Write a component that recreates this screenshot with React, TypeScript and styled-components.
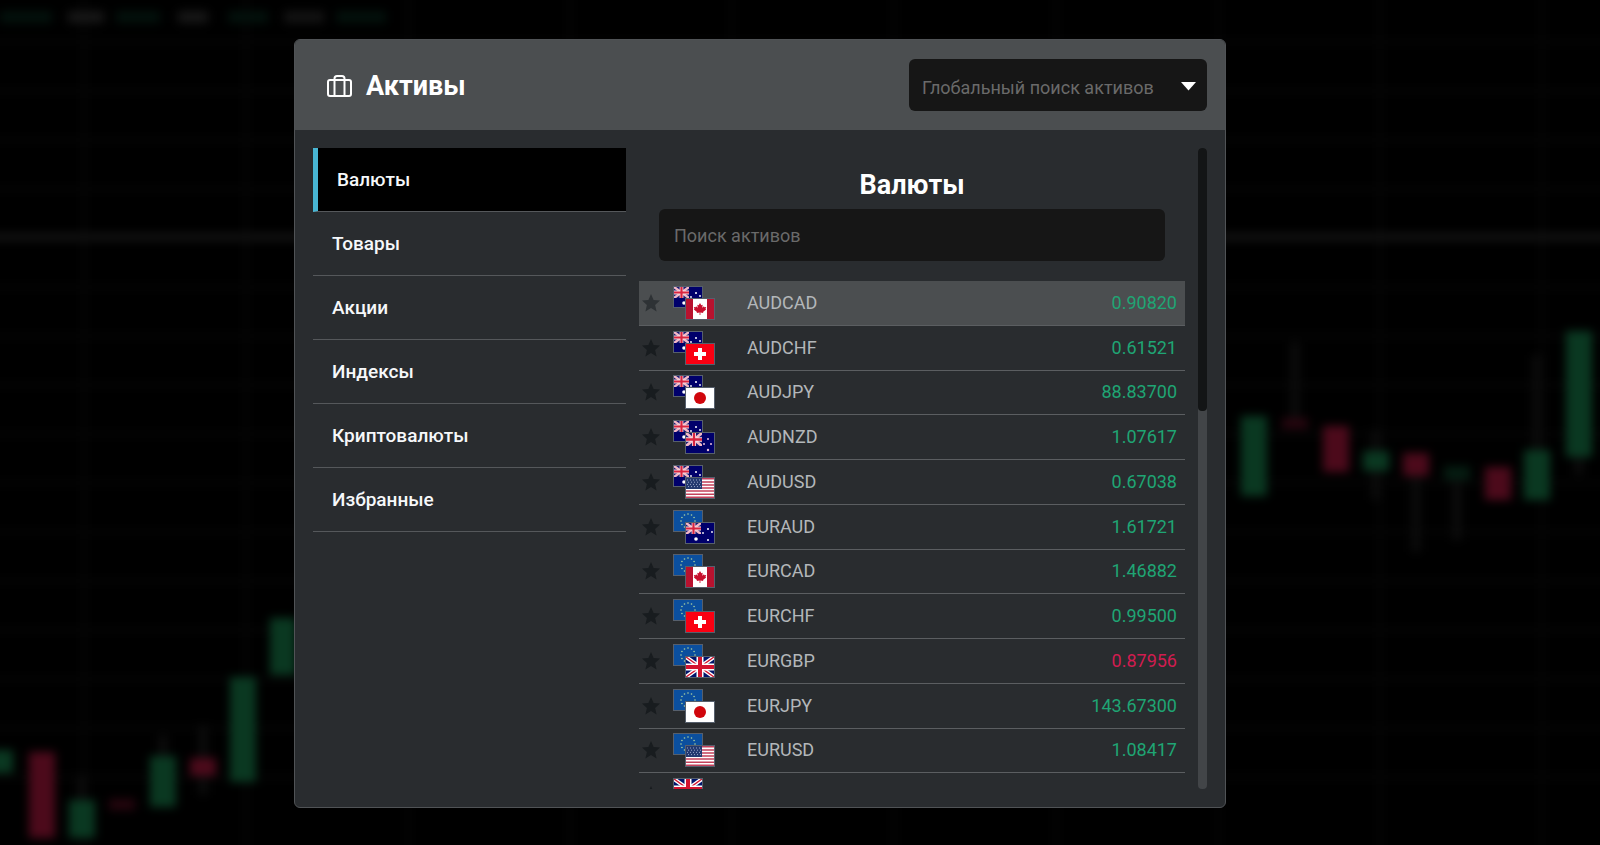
import React, { useState } from "react";
import styled, { createGlobalStyle } from "styled-components";

const GlobalStyle = createGlobalStyle`
  *, *::before, *::after { box-sizing: border-box; }
  body {
    margin: 0;
    background: #000;
    color: #fff;
    font-family: Roboto, "Noto Sans", sans-serif;
  }
  button, input, select { font: inherit; color: inherit; }
`;

const GREEN = "#1fa574";
const RED = "#d11c50";

/* ---------- Background chart ---------- */

const Backdrop = styled.svg`
  position: fixed;
  inset: 0;
  width: 100%;
  height: 100%;
  z-index: -1;
`;

type Candle = { x: number; top: number; bottom: number; up?: boolean; dim?: boolean };

const candles: Candle[] = [
  { x: 0, top: 750, bottom: 773, up: true },
  { x: 42, top: 752, bottom: 838 },
  { x: 82, top: 800, bottom: 838, up: true },
  { x: 122, top: 799, bottom: 810, dim: true },
  { x: 163, top: 756, bottom: 807, up: true },
  { x: 203, top: 758, bottom: 776 },
  { x: 243, top: 677, bottom: 782, up: true },
  { x: 283, top: 618, bottom: 675, up: true },
  { x: 1254, top: 416, bottom: 496, up: true },
  { x: 1295, top: 418, bottom: 429, dim: true },
  { x: 1336, top: 426, bottom: 472 },
  { x: 1376, top: 451, bottom: 471, up: true },
  { x: 1416, top: 453, bottom: 476 },
  { x: 1457, top: 466, bottom: 480, up: true, dim: true },
  { x: 1498, top: 467, bottom: 500 },
  { x: 1537, top: 450, bottom: 500, up: true },
  { x: 1579, top: 331, bottom: 457, up: true },
];

const wicks = [
  [203, 725, 795], [163, 735, 757], [82, 775, 800], [1295, 342, 420], [1376, 430, 500],
  [1416, 476, 552], [1457, 480, 540], [1537, 355, 450], [1579, 457, 475],
];

const legend: [number, number, string][] = [
  [0, 52, "#03110c"], [68, 36, "#171717"], [116, 44, "#03110c"], [178, 30, "#171717"],
  [228, 40, "#03110c"], [284, 40, "#131313"], [336, 50, "#03110c"],
];

const Chart = () => (
  <Backdrop viewBox="0 0 1600 845" preserveAspectRatio="xMidYMid slice" aria-hidden="true">
    <defs>
      <filter
        id="soft"
        filterUnits="userSpaceOnUse"
        x="-40"
        y="-40"
        width="1680"
        height="925"
        colorInterpolationFilters="sRGB"
      >
        <feGaussianBlur stdDeviation="5" />
      </filter>
    </defs>
    <g filter="url(#soft)">
      <rect x="-40" y="-40" width="1680" height="925" fill="#000" />
      {Array.from({ length: 16 }, (_, i) => (
        <rect key={i} x="-40" y={40 + i * 49} width="1680" height="4" fill="#060606" />
      ))}
      {Array.from({ length: 10 }, (_, i) => (
        <rect key={i} x={82 + i * 162} y="-40" width="4" height="925" fill="#060606" />
      ))}
      <rect x="-40" y="233" width="1680" height="8" fill="#121212" />
      {legend.map(([x, w, fill]) => (
        <rect key={x} x={x} y="11" width={w} height="12" fill={fill} />
      ))}
      {wicks.map(([x, a, b]) => (
        <rect key={x} x={x - 5} y={a} width="10" height={b - a} fill="#0b0b0b" />
      ))}
      {candles.map((c) => (
        <rect
          key={c.x}
          x={c.x - 13}
          y={c.top}
          width="26"
          height={c.bottom - c.top}
          fill={c.up ? "#0a3821" : "#4c0a1b"}
          opacity={c.dim ? 0.5 : 1}
        />
      ))}
    </g>
  </Backdrop>
);

/* ---------- Flags ---------- */

const UnionJack = () => (
  <>
    <path fill="#00156b" d="M0 0h28v20H0z" />
    <path stroke="#fff" strokeWidth="4" d="M0 0l28 20M28 0L0 20" />
    <path stroke="#d3142f" strokeWidth="1.4" d="M0 0l28 20M28 0L0 20" />
    <path stroke="#fff" strokeWidth="7" d="M14 0v20M0 10h28" />
    <path stroke="#d3142f" strokeWidth="4" d="M14 0v20M0 10h28" />
  </>
);

const Canton = () => (
  <>
    <path fill="#1a1a72" d="M0 0h28v20H0z" />
    <path stroke="#f3b8c6" strokeWidth="4.500" d="M0 0l28 20M28 0L0 20" />
    <path stroke="#f6dbe2" strokeWidth="7" d="M14 0v20M0 10h28" />
    <path stroke="#d8243f" strokeWidth="4" d="M14 0v20M0 10h28" />
  </>
);

const ring = Array.from({ length: 12 }, (_, i) => {
  const a = (i * Math.PI) / 6;
  return [14 + 7 * Math.sin(a), 10 - 7 * Math.cos(a)];
});

const flagArt: Record<string, React.ReactNode> = {
  au: (
    <>
      <path fill="#00006b" d="M0 0h28v20H0z" />
      <svg width="15" height="11" viewBox="0 0 28 20" preserveAspectRatio="none"><Canton /></svg>
      <g fill="#fff">
        <circle cx="10" cy="16" r="1.800" /><circle cx="22" cy="17" r="1" /><circle cx="22" cy="6" r="1" />
        <circle cx="17" cy="10" r=".9" /><circle cx="26" cy="9" r=".9" />
      </g>
    </>
  ),
  nz: (
    <>
      <path fill="#00006b" d="M0 0h28v20H0z" />
      <svg width="16" height="13" viewBox="0 0 28 20" preserveAspectRatio="none"><Canton /></svg>
      <g fill="#e8c0d8">
        <circle cx="22" cy="6" r="1" /><circle cx="18" cy="11" r="1" />
        <circle cx="25" cy="11" r="1" /><circle cx="22" cy="17" r="1.200" />
      </g>
    </>
  ),
  ca: (
    <>
      <path fill="#fff" d="M0 0h28v20H0z" />
      <path fill="#b8122f" d="M0 0h7v20H0zM21 0h7v20h-7z" />
      <path fill="#c8102e" d="M14 4l1.300 2.300 1.400-.6-.5 3 1.800-1.400.3 1 1.900-.2-.7 1.800.7.5-3.200 2.500.3 1.100-2.900-.4V16h-.8v-2.400l-2.900.4.3-1.100-3.200-2.500.7-.5-.7-1.800 1.900.2.300-1 1.800 1.400-.5-3 1.400.6z" />
    </>
  ),
  ch: (
    <>
      <path fill="#fa0012" d="M0 0h28v20H0z" />
      <path fill="#fff" d="M12 4h4v4h4v4h-4v4h-4v-4H8V8h4z" />
    </>
  ),
  jp: (
    <>
      <path fill="#fff" d="M0 0h28v20H0z" />
      <circle cx="14" cy="10" r="6" fill="#d0060c" />
    </>
  ),
  us: (
    <>
      <path fill="#fff" d="M0 0h28v20H0z" />
      <path stroke="#c4405a" strokeWidth="1.540" d="M0 .8h28M0 3.900h28M0 7h28M0 10h28M0 13.100h28M0 16.200h28M0 19.200h28" />
      <path fill="#243a70" d="M0 0h16v11H0z" />
      <path stroke="#9aa6c8" strokeWidth="1" strokeDasharray="1 2" d="M1 2h14M2 4.200h13M1 6.400h14M2 8.600h13" />
    </>
  ),
  eu: (
    <>
      <path fill="#0b4f9e" d="M0 0h28v20H0z" />
      {ring.map(([x, y], i) => <circle key={i} cx={x} cy={y} r=".8" fill="#a9cfa0" />)}
    </>
  ),
  gb: <UnionJack />,
};

const FlagPair = styled.span`
  display: grid;
  width: 42px;
  height: 34px;
`;

const FlagBox = styled.svg<{ $front?: boolean }>`
  grid-area: 1 / 1;
  place-self: ${(p) => (p.$front ? "end" : "start")};
  width: 30px;
  height: 22px;
  border: 1px solid #565f6c;
`;

const Flag = ({ code, front }: { code: string; front?: boolean }) => (
  <FlagBox $front={front} viewBox="0 0 28 20" fill="none" aria-hidden="true">
    {flagArt[code]}
  </FlagBox>
);

/* ---------- Dialog ---------- */

const Overlay = styled.main`
  display: flex;
  justify-content: center;
  align-items: flex-start;
  min-height: 100vh;
  padding: 39px 80px 36px 0;
`;

const Dialog = styled.section`
  width: 100%;
  max-width: 932px;
  border: 1px solid #505356;
  border-radius: 6px;
  background: #292c2f;
  overflow: hidden;
`;

const Header = styled.header`
  display: flex;
  align-items: center;
  justify-content: space-between;
  padding: 19px 18px 19px 31px;
  background: #4b4e50;
`;

const Title = styled.h1`
  display: flex;
  align-items: center;
  gap: 13px;
  margin: 0;
  padding-top: 2px;
  font-size: 27px;
  line-height: 32px;
  font-weight: 700;
`;

const SearchSelect = styled.label`
  display: grid;
  align-items: center;
  width: 298px;
`;

const Select = styled.select`
  grid-area: 1 / 1;
  appearance: none;
  width: 100%;
  height: 52px;
  padding: 4px 40px 0 13px;
  border: 0;
  border-radius: 6px;
  background: #161616;
  color: #6a6a6a;
  font-size: 18px;
`;

const Caret = styled.svg`
  grid-area: 1 / 1;
  justify-self: end;
  margin: 2px 10px 0 0;
  pointer-events: none;
`;

const Body = styled.div`
  display: flex;
  gap: 13px;
  height: calc(100vh - 168px);
  padding: 18px;
`;

const Categories = styled.nav`
  flex: 0 0 313px;
`;

const Category = styled.button<{ $active: boolean }>`
  display: block;
  width: 100%;
  height: 64px;
  padding: 0 19px;
  border: 0;
  border-bottom: 1px solid #55585b;
  border-left: ${(p) => (p.$active ? "5px solid #48b5d3" : "0")};
  background: ${(p) => (p.$active ? "#000" : "transparent")};
  color: #f6f8fa;
  font-size: 19px;
  font-weight: 500;
  text-align: left;
  cursor: pointer;
`;

const Assets = styled.section`
  flex: 1;
  min-width: 0;
  overflow: hidden;
`;

const AssetsTitle = styled.h2`
  margin: 0;
  padding: 21px 0 8px;
  font-size: 27px;
  line-height: 32px;
  font-weight: 700;
  text-align: center;
`;

const SearchField = styled.div`
  padding: 0 20px 20px;
`;

const SearchInput = styled.input`
  display: block;
  width: 100%;
  height: 52px;
  padding: 0 15px;
  border: 0;
  border-radius: 6px;
  background: #161616;
  font-size: 18px;
  &::placeholder { color: #6a6a6a; opacity: 1; }
`;

const Table = styled.table`
  width: 100%;
  height: 537px;
  border-collapse: separate;
  border-spacing: 0;
  font-size: 18px;
  line-height: 22px;
`;

const Row = styled.tr<{ $selected: boolean }>`
  background: ${(p) => (p.$selected ? "#4b4e50" : "transparent")};
  --star: ${(p) => (p.$selected ? "#2e3235" : "#181c1f")};
`;

const Cell = styled.td`
  padding: 0;
  border-bottom: 1px solid #5b5e61;
  vertical-align: middle;
`;

const StarCell = styled(Cell)`
  width: 34px;
`;

const FlagCell = styled(Cell)`
  width: 74px;
`;

const SymbolCell = styled(Cell)`
  color: #b3b7ba;
`;

const PriceCell = styled(Cell)<{ $down?: boolean }>`
  padding-right: 8px;
  color: ${(p) => (p.$down ? RED : GREEN)};
  text-align: right;
`;

const StarButton = styled.button`
  display: block;
  padding: 0 3px;
  border: 0;
  background: none;
  color: var(--star);
  cursor: pointer;
  svg { display: block; }
`;

const Track = styled.div`
  flex: 0 0 9px;
  border-radius: 4px;
  background: #424548;
`;

const Thumb = styled.div`
  height: 41%;
  border-radius: 4px;
  background: #131516;
`;

const categories = ["Валюты", "Товары", "Акции", "Индексы", "Криптовалюты", "Избранные"];

type Asset = { base: string; quote: string; symbol?: string; price?: string; down?: boolean };

const assets: Asset[] = [
  { base: "au", quote: "ca", symbol: "AUDCAD", price: "0.90820" },
  { base: "au", quote: "ch", symbol: "AUDCHF", price: "0.61521" },
  { base: "au", quote: "jp", symbol: "AUDJPY", price: "88.83700" },
  { base: "au", quote: "nz", symbol: "AUDNZD", price: "1.07617" },
  { base: "au", quote: "us", symbol: "AUDUSD", price: "0.67038" },
  { base: "eu", quote: "au", symbol: "EURAUD", price: "1.61721" },
  { base: "eu", quote: "ca", symbol: "EURCAD", price: "1.46882" },
  { base: "eu", quote: "ch", symbol: "EURCHF", price: "0.99500" },
  { base: "eu", quote: "gb", symbol: "EURGBP", price: "0.87956", down: true },
  { base: "eu", quote: "jp", symbol: "EURJPY", price: "143.67300" },
  { base: "eu", quote: "us", symbol: "EURUSD", price: "1.08417" },
  { base: "gb", quote: "au" },
];

const Suitcase = () => (
  <svg width="27" height="24" viewBox="0 0 27 24" fill="none" stroke="#fff" strokeWidth="2" strokeLinejoin="round" aria-hidden="true">
    <rect x="2" y="6" width="23" height="16" rx="2" />
    <path d="M8.500 22V4.500Q8.500 2 11 2h5q2.500 0 2.500 2.500V22" />
  </svg>
);

export default function App() {
  const [active, setActive] = useState(0);
  return (
    <>
      <GlobalStyle />
      <Chart />
      <Overlay>
        <Dialog aria-labelledby="title">
          <Header>
            <Title id="title"><Suitcase />Активы</Title>
            <SearchSelect>
              <Select aria-label="Глобальный поиск активов" defaultValue="">
                <option value="">Глобальный поиск активов</option>
              </Select>
              <Caret width="17" height="10" viewBox="0 0 17 10" aria-hidden="true">
                <path fill="#fff" d="M1 1h15L8.500 9.500z" />
              </Caret>
            </SearchSelect>
          </Header>
          <Body>
            <Categories>
              {categories.map((name, i) => (
                <Category key={name} type="button" $active={i === active} onClick={() => setActive(i)}>
                  {name}
                </Category>
              ))}
            </Categories>
            <Assets>
              <AssetsTitle>Валюты</AssetsTitle>
              <SearchField>
                <SearchInput type="text" aria-label="Поиск активов" placeholder="Поиск активов" />
              </SearchField>
              <Table>
                <tbody>
                  {assets.map((a, i) => (
                    <Row key={a.base + a.quote} $selected={i === 0}>
                      <StarCell>
                        <StarButton type="button" aria-label="Избранные">
                          <svg width="18" height="18" viewBox="0 0 18 18" fill="currentColor" aria-hidden="true">
                            <path d="M9 0l2.600 6.100 6.400.5-4.900 4.300 1.500 6.600L9 14l-5.600 3.500 1.500-6.600L0 6.600l6.400-.5z" />
                          </svg>
                        </StarButton>
                      </StarCell>
                      <FlagCell>
                        <FlagPair><Flag code={a.base} /><Flag code={a.quote} front /></FlagPair>
                      </FlagCell>
                      <SymbolCell>{a.symbol}</SymbolCell>
                      <PriceCell $down={a.down}>{a.price}</PriceCell>
                    </Row>
                  ))}
                </tbody>
              </Table>
            </Assets>
            <Track aria-hidden="true"><Thumb /></Track>
          </Body>
        </Dialog>
      </Overlay>
    </>
  );
}
